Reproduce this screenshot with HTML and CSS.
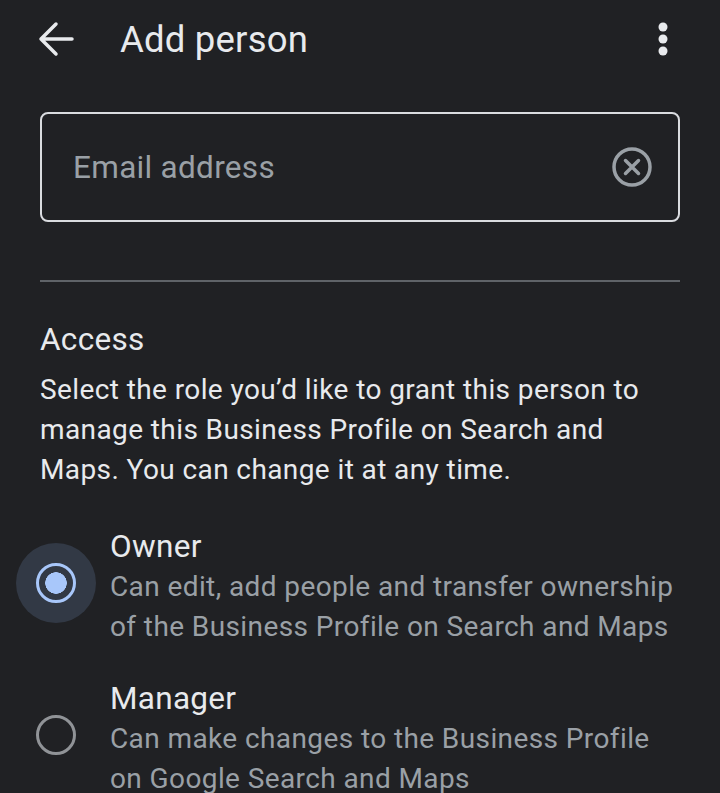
FILE: index.html
```html
<!DOCTYPE html>
<html lang="en">
<head>
<meta charset="UTF-8" />
<meta name="viewport" content="width=device-width, initial-scale=1" />
<title>Add person</title>
<link rel="stylesheet" href="styles.css">
</head>
<body>

<!-- Top bar -->
<header class="topBar">
  <button class="iconBtn backBtn" aria-label="Back">
    <svg width="40" height="40" viewBox="0 0 40 40"><path d="M36 20H5M20 5L5 20l15 15" fill="none" stroke="#e8eaed" stroke-width="3.5" stroke-linecap="round" stroke-linejoin="round"/></svg>
  </button>
  <h1 class="pageTitle">Add person</h1>
  <button class="iconBtn moreBtn" aria-label="More options">
    <svg width="12" height="36" viewBox="0 0 12 36"><circle cx="6" cy="6" r="4.5" fill="#e8eaed"/><circle cx="6" cy="18" r="4.5" fill="#e8eaed"/><circle cx="6" cy="30" r="4.5" fill="#e8eaed"/></svg>
  </button>
</header>

<main class="content">
  <!-- Email field -->
  <div class="emailField">
    <span class="placeholder">Email address</span>
    <svg class="clearIcon" width="42" height="42" viewBox="0 0 42 42">
      <circle cx="21" cy="21" r="18" fill="none" stroke="#9aa0a6" stroke-width="3.5"/>
      <path d="M14.5 14.5l13 13M27.5 14.5l-13 13" stroke="#9aa0a6" stroke-width="3.5" stroke-linecap="round"/>
    </svg>
  </div>

  <hr class="divider">

  <!-- Access section -->
  <h2 class="sectionTitle">Access</h2>
  <p class="sectionText">Select the role you’d like to grant this person to manage this Business Profile on Search and Maps. You can change it at any time.</p>

  <div class="roleList">
    <label class="roleItem">
      <span class="radio checked"><span class="radioRing"></span></span>
      <span class="roleText">
        <span class="roleName">Owner</span>
        <span class="roleDesc">Can edit, add people and transfer ownership of the Business Profile on Search and Maps</span>
      </span>
    </label>
    <label class="roleItem">
      <span class="radio"><span class="radioRing"></span></span>
      <span class="roleText">
        <span class="roleName">Manager</span>
        <span class="roleDesc">Can make changes to the Business Profile on Google Search and Maps</span>
      </span>
    </label>
  </div>
</main>

</body>
</html>
```

FILE: styles.css
```css
body {
  margin: 0;
  background-color: #202124;
  color: #e8eaed;
  font-family: Roboto, "Noto Sans", sans-serif;
  overflow: hidden;
}

/* Top bar */
.topBar {
  display: flex;
  align-items: center;
  height: 78px;
  padding: 0 38px 0 36px;
}

.iconBtn {
  background: none;
  border: none;
  padding: 0;
  display: flex;
  cursor: pointer;
}

.pageTitle {
  flex: 1;
  margin: 0 0 0 44px;
  font-size: 36.5px;
  font-weight: 400;
  letter-spacing: 0.2px;
}

.moreBtn {
  margin-right: 13px;
}

/* Main content */
.content {
  padding: 0 40px;
}

.emailField {
  display: flex;
  align-items: center;
  justify-content: space-between;
  height: 106px;
  margin-top: 34px;
  padding: 0 25px 0 31px;
  border: 2px solid #dadce0;
  border-radius: 8px;
}

.placeholder {
  font-size: 31.5px;
  color: #9aa0a6;
  letter-spacing: 0.3px;
}

.divider {
  margin: 58px 0 0;
  border: none;
  border-top: 2px solid #5f6368;
}

.sectionTitle {
  margin: 38px 0 0;
  font-size: 31.5px;
  font-weight: 400;
  line-height: 40px;
  letter-spacing: 0.3px;
}

.sectionText {
  margin: 10px 0 0;
  font-size: 28px;
  line-height: 40px;
  letter-spacing: 0.4px;
}

/* Role options */
.roleList {
  margin: 37px 0 0 -24px;
  display: flex;
  flex-direction: column;
  gap: 32px;
}

.roleItem {
  display: flex;
  align-items: center;
  gap: 14px;
}

.radio {
  width: 80px;
  height: 80px;
  border-radius: 50%;
  display: flex;
  align-items: center;
  justify-content: center;
  flex-shrink: 0;
  margin-top: -8px;
}

.radioRing {
  width: 40px;
  height: 40px;
  border-radius: 50%;
  border: 3.5px solid #909397;
  box-sizing: border-box;
}

.radio.checked {
  background-color: #323945;
}

.radio.checked .radioRing {
  border-color: #a8c7fa;
  background: radial-gradient(circle, #a8c7fa 0 10.5px, transparent 11px);
}

.roleText {
  display: flex;
  flex-direction: column;
}

.roleName {
  font-size: 31.5px;
  line-height: 40px;
  letter-spacing: 0.3px;
}

.roleDesc {
  font-size: 28px;
  line-height: 40px;
  color: #9aa0a6;
  letter-spacing: 0.4px;
}
```
